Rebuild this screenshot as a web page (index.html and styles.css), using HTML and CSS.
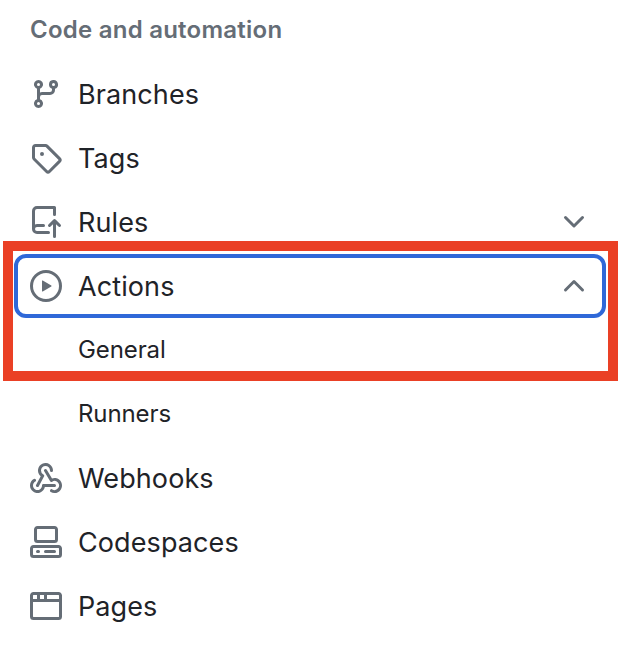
FILE: index.html
```html
<!DOCTYPE html>
<html lang="en">
<head>
    <meta charset="UTF-8">
    <meta name="viewport" content="width=device-width, initial-scale=1.0">
    <title>Settings</title>
    <link rel="stylesheet" href="styles.css">
</head>
<body>
    <nav class="sidebar">
        <h3 class="heading">Code and automation</h3>
        <ul class="list">
            <li>
                <a class="item">
                    <svg class="icon" viewBox="0 0 16 16"><path d="M9.5 3.25a2.25 2.25 0 1 1 3 2.122V6A2.5 2.5 0 0 1 10 8.5H6a1 1 0 0 0-1 1v1.128a2.251 2.251 0 1 1-1.5 0V5.372a2.25 2.25 0 1 1 1.5 0v1.836A2.493 2.493 0 0 1 6 7h4a1 1 0 0 0 1-1v-.628A2.25 2.25 0 0 1 9.5 3.25Zm-6 0a.75.75 0 1 0 1.5 0 .75.75 0 0 0-1.5 0Zm8.25-.75a.75.75 0 1 0 0 1.5.75.75 0 0 0 0-1.5ZM4.25 12a.75.75 0 1 0 0 1.5.75.75 0 0 0 0-1.5Z"/></svg>
                    <span class="label">Branches</span>
                </a>
            </li>
            <li>
                <a class="item">
                    <svg class="icon" viewBox="0 0 16 16"><path d="M1 7.775V2.75C1 1.784 1.784 1 2.75 1h5.025c.464 0 .91.184 1.238.513l6.25 6.25a1.75 1.75 0 0 1 0 2.474l-5.026 5.026a1.75 1.75 0 0 1-2.474 0l-6.25-6.25A1.752 1.752 0 0 1 1 7.775Zm1.5 0c0 .066.026.13.073.177l6.25 6.25a.25.25 0 0 0 .354 0l5.025-5.025a.25.25 0 0 0 0-.354l-6.25-6.25a.25.25 0 0 0-.177-.073H2.75a.25.25 0 0 0-.25.25ZM6 5a1 1 0 1 1 0 2 1 1 0 0 1 0-2Z"/></svg>
                    <span class="label">Tags</span>
                </a>
            </li>
            <li>
                <a class="item">
                    <svg class="icon" viewBox="0 0 16 16"><path d="M1 2.5A2.5 2.5 0 0 1 3.5 0h8.75a.75.75 0 0 1 .75.75v3.5a.75.75 0 0 1-1.5 0V1.5h-8a1 1 0 0 0-1 1v6.708A2.493 2.493 0 0 1 3.5 9h3.25a.75.75 0 0 1 0 1.5H3.5a1 1 0 0 0 0 2h5.75a.75.75 0 0 1 0 1.5H3.5A2.5 2.5 0 0 1 1 11.5Zm13.23 7.79h-.001l-1.224-1.224v6.184a.75.75 0 0 1-1.5 0V9.066L10.28 10.29a.75.75 0 0 1-1.06-1.061l2.505-2.504a.75.75 0 0 1 1.06 0L15.29 9.23a.751.751 0 0 1-.018 1.042.751.751 0 0 1-1.042.018Z"/></svg>
                    <span class="label">Rules</span>
                    <svg class="icon" viewBox="0 0 16 16"><path d="M12.78 5.22a.749.749 0 0 1 0 1.06l-4.25 4.25a.749.749 0 0 1-1.06 0L3.22 6.28a.749.749 0 1 1 1.06-1.06L8 8.939l3.72-3.719a.749.749 0 0 1 1.06 0Z"/></svg>
                </a>
            </li>
            <li>
                <a class="item focused">
                    <svg class="icon" viewBox="0 0 16 16"><path d="M8 0a8 8 0 1 1 0 16A8 8 0 0 1 8 0ZM1.5 8a6.5 6.5 0 1 0 13 0 6.5 6.5 0 0 0-13 0Zm4.879-2.773 4.264 2.559a.25.25 0 0 1 0 .428l-4.264 2.559A.25.25 0 0 1 6 10.559V5.442a.25.25 0 0 1 .379-.215Z"/></svg>
                    <span class="label">Actions</span>
                    <svg class="icon" viewBox="0 0 16 16"><path d="M3.22 10.53a.749.749 0 0 1 0-1.06l4.25-4.25a.749.749 0 0 1 1.06 0l4.25 4.25a.749.749 0 1 1-1.06 1.06L8 6.811 4.28 10.53a.749.749 0 0 1-1.06 0Z"/></svg>
                </a>
                <ul class="list">
                    <li><a class="item sub"><span class="label">General</span></a></li>
                    <li><a class="item sub"><span class="label">Runners</span></a></li>
                </ul>
            </li>
            <li>
                <a class="item">
                    <svg class="icon" viewBox="0 0 16 16"><path d="M5.5 4.25a2.25 2.25 0 0 1 4.5 0 .75.75 0 0 0 1.5 0 3.75 3.75 0 1 0-6.14 2.889l-2.272 4.258a.75.75 0 0 0 1.324.706L7 7.25a.75.75 0 0 0-.309-1.015A2.25 2.25 0 0 1 5.5 4.25Z"/><path d="M7.364 3.607a.75.75 0 0 1 1.03.257l2.608 4.349a3.75 3.75 0 1 1-.628 6.785.75.75 0 0 1 .752-1.299 2.25 2.25 0 1 0-.033-3.88.75.75 0 0 1-1.03-.256L7.107 4.636a.75.75 0 0 1 .257-1.03Z"/><path d="M2.9 8.776A.75.75 0 0 1 2.625 9.8 2.25 2.25 0 1 0 6 11.75a.75.75 0 0 1 .75-.751h5.5a.75.75 0 0 1 0 1.5H7.425a3.75 3.75 0 1 1-5.55-3.998.75.75 0 0 1 1.024.274Z"/></svg>
                    <span class="label">Webhooks</span>
                </a>
            </li>
            <li>
                <a class="item">
                    <svg class="icon" viewBox="0 0 16 16"><path d="M0 11.25c0-.966.784-1.75 1.75-1.75h12.5c.966 0 1.75.784 1.75 1.75v3A1.75 1.75 0 0 1 14.25 16H1.75A1.75 1.75 0 0 1 0 14.25Zm2-9.5C2 .784 2.784 0 3.75 0h8.5C13.216 0 14 .784 14 1.75v5a1.75 1.75 0 0 1-1.75 1.75h-8.5A1.75 1.75 0 0 1 2 6.75Zm1.75-.25a.25.25 0 0 0-.25.25v5c0 .138.112.25.25.25h8.5a.25.25 0 0 0 .25-.25v-5a.25.25 0 0 0-.25-.25Zm-2 9.5a.25.25 0 0 0-.25.25v3c0 .138.112.25.25.25h12.5a.25.25 0 0 0 .25-.25v-3a.25.25 0 0 0-.25-.25ZM7 12.75a.75.75 0 0 1 .75-.75h4.5a.75.75 0 0 1 0 1.5h-4.5a.75.75 0 0 1-.75-.75Zm-4 0a.75.75 0 0 1 .75-.75h.5a.75.75 0 0 1 0 1.5h-.5a.75.75 0 0 1-.75-.75Z"/></svg>
                    <span class="label">Codespaces</span>
                </a>
            </li>
            <li>
                <a class="item">
                    <svg class="icon" viewBox="0 0 16 16"><path d="M0 2.75C0 1.784.784 1 1.75 1h12.5c.966 0 1.75.784 1.75 1.75v10.5A1.75 1.75 0 0 1 14.25 15H1.75A1.75 1.75 0 0 1 0 13.25ZM14.5 6h-13v7.25c0 .138.112.25.25.25h12.5a.25.25 0 0 0 .25-.25Zm-6-3.5v2h6V2.75a.25.25 0 0 0-.25-.25ZM5 2.5v2h2v-2Zm-3.25 0a.25.25 0 0 0-.25.25V4.5h2v-2Z"/></svg>
                    <span class="label">Pages</span>
                </a>
            </li>
        </ul>
    </nav>
    <div class="highlight"></div>
</body>
</html>
```

FILE: styles.css
```css
* {
    box-sizing: border-box;
}
body {
    position: relative;
    height: 648px;
    margin: 0;
    overflow: hidden;
    background: #ffffff;
    color: #1f2328;
    font-family: Inter, "Liberation Sans", sans-serif;
}
.sidebar {
    padding: 12px 22px 0 14px;
}
.heading {
    margin: 0 0 14px;
    padding: 0 16px;
    color: #656d76;
    font-size: 24px;
    font-weight: 600;
    letter-spacing: 0.24px;
    line-height: 36px;
}
.list {
    margin: 0;
    padding: 0;
    list-style: none;
}
.item {
    display: flex;
    align-items: center;
    gap: 16px;
    height: 64px;
    padding: 0 16px;
    font-size: 27px;
    letter-spacing: 0.1px;
}
.focused {
    border: 4px solid #2f68d8;
    border-radius: 12px;
    padding: 0 12px;
}
.sub {
    padding: 0 16px 2px 64px;
    font-size: 24px;
    letter-spacing: -0.1px;
}
.label {
    flex: 1;
}
.icon {
    width: 32px;
    height: 32px;
    fill: #656d76;
}
/* red frame around Actions > General */
.highlight {
    position: absolute;
    top: 241px;
    left: 3px;
    width: 615px;
    height: 140px;
    border: 10px solid #ea4025;
}
```
